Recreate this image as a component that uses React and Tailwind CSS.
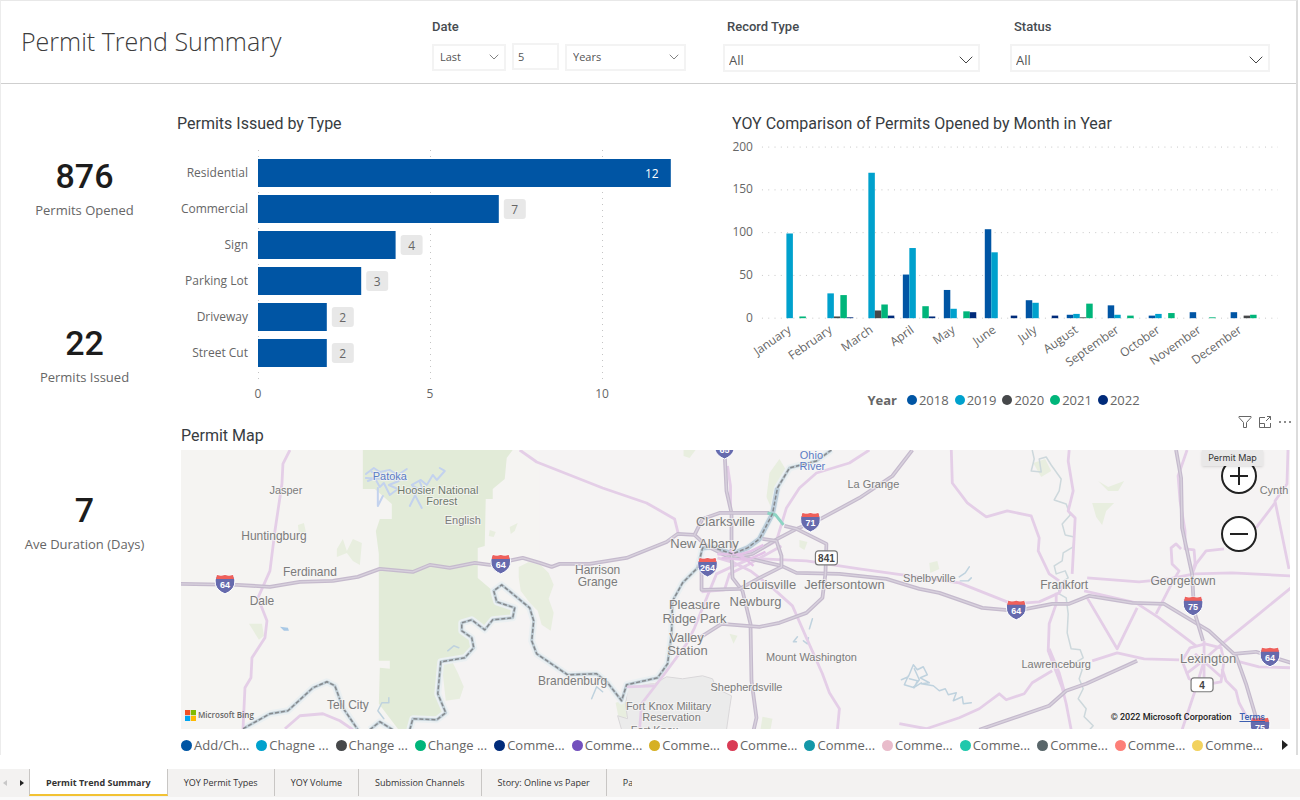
import React, { useState } from 'react';
import { ChevronDown } from 'lucide-react';

const COLORS = ['#0055a4', '#00a1cd', '#46484a', '#00b57a', '#002b7a'];

const kpis = [
  { value: '876', label: 'Permits Opened' },
  { value: '22', label: 'Permits Issued' },
  { value: '7', label: 'Ave Duration (Days)' },
];

const permitTypes = [
  { name: 'Residential', count: 12 },
  { name: 'Commercial', count: 7 },
  { name: 'Sign', count: 4 },
  { name: 'Parking Lot', count: 3 },
  { name: 'Driveway', count: 2 },
  { name: 'Street Cut', count: 2 },
];

const years = ['2018', '2019', '2020', '2021', '2022'];

// permits opened per month, one value per year
const months = [
  { name: 'January', values: [0, 99, 0, 2, 0] },
  { name: 'February', values: [0, 29, 2, 27, 1] },
  { name: 'March', values: [0, 170, 9, 16, 3] },
  { name: 'April', values: [51, 82, 0, 14, 2] },
  { name: 'May', values: [33, 11, 0, 8, 7] },
  { name: 'June', values: [104, 77, 0, 0, 3] },
  { name: 'July', values: [21, 18, 0, 0, 3] },
  { name: 'August', values: [4, 5, 1, 17, 0] },
  { name: 'September', values: [15, 4, 0, 3, 0] },
  { name: 'October', values: [3, 5, 0, 6, 0] },
  { name: 'November', values: [7, 0, 0, 1, 0] },
  { name: 'December', values: [7, 0, 3, 4, 0] },
];

const mapLegend = [
  ['Add/Ch...', '#0055a4'],
  ['Chagne ...', '#00a1cd'],
  ['Change ...', '#46484a'],
  ['Change ...', '#00b57a'],
  ['Comme...', '#002b7a'],
  ['Comme...', '#7350bd'],
  ['Comme...', '#d6b024'],
  ['Comme...', '#d93b55'],
  ['Comme...', '#1497a8'],
  ['Comme...', '#e9bccb'],
  ['Comme...', '#1fc8ac'],
  ['Comme...', '#59666a'],
  ['Comme...', '#fd7f78'],
  ['Comme...', '#f2d25e'],
];

const tabs = ['Permit Trend Summary', 'YOY Permit Types', 'YOY Volume', 'Submission Channels', 'Story: Online vs Paper'];

const interstates = [
  '180,583 237,584 270,586 300,581 333,580 358,576 380,568 413,571 430,564 450,567 475,562 490,564 523,557 540,562 552,566 560,563 590,563 627,557 667,541 678,533 695,534 707,545 727,555 747,557 782,565 797,572 840,573 887,578 920,588 940,592 983,607 1017,610 1053,603 1070,603 1090,595 1133,602 1165,603 1210,630 1237,655 1247,683 1258,720 1262,730',
  '1235,653 1257,651 1292,662',
  '913,449 893,475 860,497 823,517 797,528 778,538 753,553 735,556',
  '725,449 727,490 732,512 732,553 733,577 743,590 751,623 752,680 757,717 754,730',
  '695,534 703,518 720,512 770,512',
  '785,525 797,528 827,543 826,573 823,597 807,612 780,622 760,626 722,623 700,637',
  '702,568 702,589 740,588 760,577 782,566 782,555 777,540 763,538',
  '980,729 1050,705 1067,690 1087,683 1127,665 1138,660',
  '1177,449 1182,477 1183,527 1193,573 1195,610 1204,640',
];

const highways = [
  '290,449 283,463 282,483 275,530 270,570 258,597 267,620 265,637 252,657 251,677 245,687 243,729',
  '285,728 300,715 323,713 340,720 353,729',
  '520,449 537,461 603,487 647,502 675,518 679,534',
  '728,465 731,485 731,512',
  '870,449 850,462 817,472 800,487 787,507 780,530 777,540 745,557',
  '753,557 730,567 717,573 710,590 695,627 687,643 665,673 642,703 640,729',
  '702,591 725,589 730,573 750,563 782,545',
  '718,553 740,557 807,560 860,568 903,574 960,582 1013,603 1040,601 1060,592 1066,580',
  '718,557 735,562 751,570 773,587 793,605 807,637 823,673 830,692 840,708 838,729',
  '627,686 655,685',
  '952,449 953,482 968,502 987,516 1008,510 1032,515 1040,537 1039,550 1050,573 1060,580',
  '1070,449 1069,460 1074,490 1069,510 1076,517 1073,573',
  '1088,577 1140,581 1170,578 1195,573 1233,572 1292,575',
  '1188,449 1179,475 1181,500 1186,530 1186,548 1195,549 1196,562 1193,573',
  '1182,548 1177,543 1172,547 1173,563 1180,570 1174,580 1157,613',
  '1225,548 1207,550 1197,563 1193,573',
  '1289,449 1288,483 1276,500 1290,568',
  '1276,502 1257,527',
  '1292,587 1260,613 1223,643 1200,663 1187,673',
  '1085,590 1137,602 1160,617 1197,645',
  '1088,597 1118,648 1138,607',
  '1093,660 1118,652 1145,658 1180,659',
  '1237,660 1260,666 1292,667',
  '1057,592 1057,603 1050,623 1049,650 1063,687 1067,703 1072,729',
  '1050,648 1060,672 1065,690',
  '900,723 927,728 960,717 980,708 1000,693 1007,699 1025,693 1033,682 1053,670',
  '1205,660 1196,690 1183,729',
  '1223,668 1227,680 1237,690 1240,702 1247,715',
  '1183,660 1191,647 1206,643 1222,647 1225,660 1222,681 1205,684 1190,678 1183,660',
  '1205,640 1205,680',
  '1196,653 1222,676',
];

const rivers = [
  '243,728 270,713 288,710 313,687 327,681 335,685 343,707 358,729',
  '370,729 380,721 393,729',
  '410,729 413,718 437,719 446,712 438,693 441,661 465,657 474,647 472,637 462,630 462,622 472,619 485,629 493,619 513,617 515,607 497,601 494,590 502,584 530,607 534,620 532,640 537,653 568,674 597,673 608,682 622,700 627,684 658,677 668,663 672,633 673,600 683,582 698,567 703,547 712,546 733,553 748,547 760,538 773,513 778,487 790,467 817,460 832,449',
];

const KENTUCKY_RIVER =
  'M1033 449l2 9-3 12 10 1-2-13 7-2 5 8 10 14-2 12-5 9 12 4 4 11-8 9 3 11 9 2-1 10-10 6-1 8-8 5 2 8 9-3 3 7-10 7 1 9 7 4 2 16-1 19 4 16 9 1 3 8-8 5 7 7-3 9 4 10-5 10 8 10-2 8 9 9-8 9 12 9 4 9';

const places = [
  ['Jasper', 286, 493, 11],
  ['Huntingburg', 274, 539, 12],
  ['Ferdinand', 310, 575, 12],
  ['Dale', 262, 604, 12],
  ['Tell City', 348, 708, 12],
  ['English', 463, 523, 11],
  ['Harrison', 598, 573, 12],
  ['Grange', 598, 585, 12],
  ['Brandenburg', 573, 684, 12],
  ['Clarksville', 726, 525, 13],
  ['New Albany', 705, 547, 13],
  ['Louisville', 770, 588, 13],
  ['Jeffersontown', 845, 588, 13],
  ['Newburg', 756, 605, 13],
  ['Pleasure', 695, 608, 13],
  ['Ridge Park', 695, 622, 13],
  ['Valley', 687, 641, 13],
  ['Station', 688, 654, 13],
  ['Mount Washington', 812, 660, 11],
  ['Shepherdsville', 747, 690, 11],
  ['Fort Knox Military', 669, 709, 11],
  ['Reservation', 672, 720, 11],
  ['Fort Knox', 655, 733, 11],
  ['La Grange', 874, 487, 11],
  ['Shelbyville', 930, 581, 11],
  ['Frankfort', 1065, 588, 12],
  ['Georgetown', 1184, 584, 12],
  ['Lexington', 1209, 662, 13],
  ['Lawrenceburg', 1057, 667, 11],
  ['Cynth', 1275, 493, 11],
];

const shields = [
  ['64', 225, 583],
  ['64', 501, 563],
  ['65', 725, 448],
  ['71', 811, 521],
  ['264', 708, 566],
  ['64', 1017, 609],
  ['75', 1194, 605],
  ['64', 1271, 656],
  ['75', 1261, 726],
];

const Shield = ({ text, x, y }) => (
  <g transform={`translate(${x} ${y})`}>
    <path d="M-8 -9q4 1.500 8 0q4 1.500 8 0q3 5 1.500 10q-2 6 -9.500 9q-7.500 -3 -9.500 -9q-1.500 -5 1.500 -10z" fill="#666aad" stroke="#fff" strokeWidth="1" />
    <path d="M-8 -9q4 1.500 8 0q4 1.500 8 0l1 4h-18z" fill="#f0605a" />
    <text y="4" textAnchor="middle" fontSize="9" fontWeight="bold" fill="#fff">{text}</text>
  </g>
);

const RouteSign = ({ text, x, y }) => (
  <g transform={`translate(${x} ${y})`}>
    <rect x="-11" y="-7" width="22" height="14" rx="3" fill="#fff" stroke="#7a7a7a" strokeWidth="1.200" />
    <text y="4" textAnchor="middle" fontSize="10" fontWeight="bold" fill="#444">{text}</text>
  </g>
);

const MapDrawing = () => (
  <svg viewBox="181 449 1110 280" className="block w-full h-auto font-['Liberation_Sans',sans-serif]" role="img" aria-label="Permit map">
    <rect x="181" y="449" width="1110" height="280" fill="#f5f4f2" />
    <path d="M540 449h751v280H410l3-11 33-6-8-19 3-32 24-4 9-20 40-20 26-10z" fill="#f5f3f3" />

    {/* forests and parks */}
    <path
      d="M363 449H513L507 457 505 478 493 488V498H486L485 545 478 547V577L493 590 497 601 515 607 513 617 493 619 485 629 472 619 462 622 462 630 472 637 474 647 465 657 441 661 438 693 446 712 437 719 413 718 410 729H398V728L379 703 380 667 390 668V660H379V553L376 530 380 518H392V503L375 488H363Z"
      fill="#e2ebd8"
    />
    <g fill="#e8eedf">
      <path d="M519 566l10-5 12 3 8 8 5 12-5 14 5 14-3 18-9-6-4-14-8-8-9-12-2-14z" />
      <path d="M249 623h13l2 12-5 4z" />
      <path d="M337 548l6-10 4 12 6-12 9 4-2 22-7-4-6-8-10 4z" />
      <path d="M442 664l10-4 6 12 6 14-4 12-14 2z" />
      <path d="M770 472l10-14 6 10-8 24-5 18-6-14z" />
      <path d="M1093 502h22l-8 8-4 14-6-8z" />
      <path d="M1099 480l10 6 16-6-6 10h-10z" />
      <path d="M1034 462l12-4 6 12-10 6z" />
      <path d="M763 716l10 2-2 11h-10z" />
      <path d="M616 702l12-4 2 16-10 8z" />
      <path d="M298 524l6-2 2 9-7 2z" />
      <path d="M730 633l8 2-4 8z" />
      <path d="M684 449h12l-6 8-6-2z" />
      <path d="M930 562l8-2 2 8-9 4z" />
      <path d="M490 529l6 2-2 5-5-1zM510 526l8-4-3 8-4 3z" />
      <path d="M800 539l8 2-3 8-5-3z" />
    </g>
    <path d="M627 684l28-1 12-7 16 2 20-3 10 3 4 10 15 7-2 13-3 21H622l-4-14 10 3-2-14 2-16z" fill="#ebebeb" stroke="#d9d7d9" strokeWidth="1" />

    {/* lakes */}
    <g fill="none" stroke="#c3d2ee" strokeWidth="2" strokeLinecap="round" strokeLinejoin="round">
      <path d="M366 473l8-6 6 4 10-2 8 5 9-6M368 480l7-3 5 9 4-4 6 12 8-6-9-4 10-4M378 487l0 18 5-10M412 484l9-5 6 5 6-10 4 5 8-9-5-3M410 505l6-12-3-8 11 6-4-10M413 490l9 17" />
      <path d="M366 477l40 2M372 471l34 7" />
    </g>
    <path d="M280 626l8 1 1 3-5 0z" fill="#a9c9e6" />
    <g fill="none" stroke="#bfd2de" strokeWidth="1.500" strokeLinecap="round" strokeLinejoin="round">
      <path d="M902 679l7-3 5-12 4 5 6-3 4 8-7 3 9 5-8 1 12 2 6 5 6-2 3 6 8-2-3 8 9-4 1 7 8-1M909 675l-4 9 10 3 3-7-8-2M915 668l5 11-6 8 8-5" />
      <path d="M960 576l6-4 4-6M961 580l8 0 3-3M798 636l-4 5 3 0M804 640l4 3 1-6M592 698l5-12 6 5M384 718l-6-8 4-8 7 0 0-5M448 650l6-5 5 2M810 628l3-10" />
    </g>
    <path d={KENTUCKY_RIVER} fill="none" stroke="#cdd8dc" strokeWidth="1.500" strokeLinejoin="round" />

    {rivers.map((points) => (
      <g key={points} fill="none" strokeLinejoin="round">
        <polyline points={points} stroke="#ebf0f2" strokeWidth="7" />
        <polyline points={points} stroke="#c0ced6" strokeWidth="3" />
      </g>
    ))}
    <polyline points="703,547 712,546 733,553 748,547 760,538 773,513 778,487" fill="none" stroke="#bccdda" strokeWidth="5" strokeLinejoin="round" />

    {highways.map((points) => (
      <polyline key={points} points={points} fill="none" stroke="#e4cee7" strokeWidth="2.800" strokeLinejoin="round" />
    ))}
    {interstates.map((points) => (
      <g key={points} fill="none" strokeLinejoin="round">
        <polyline points={points} stroke="#c5bacd" strokeWidth="3.800" />
        <polyline points={points} stroke="#d8d1dd" strokeWidth="1.400" />
      </g>
    ))}
    <path d="M718 553h24l10-3 12-6M722 557l26 2 18-8M730 550l20 10M740 553l14 12" fill="none" stroke="#e3c3e6" strokeWidth="2.500" />
    <path d="M768 512l8 2 8 10" fill="none" stroke="#8ed4c4" strokeWidth="3" />
    {rivers.map((points) => (
      <polyline key={points} points={points} fill="none" stroke="#85898d" strokeWidth="1.500" strokeDasharray="4 2" strokeLinejoin="round" />
    ))}

    <g fill="#7b7b7b" stroke="#f7f6f5" strokeWidth="2" strokeOpacity="0.700" paintOrder="stroke" textAnchor="middle">
      {places.map(([name, x, y, size]) => (
        <text key={`${name}${y}`} x={x} y={y} fontSize={size}>{name}</text>
      ))}
      <g fontSize="11" fill="#6f7a6d">
        <text x="438" y="493">Hoosier National</text>
        <text x="442" y="504">Forest</text>
      </g>
      <g fontSize="11" fill="#5b7cc4">
        <text x="390" y="479">Patoka</text>
        <text x="812" y="458">Ohio</text>
        <text x="813" y="469">River</text>
      </g>
    </g>

    {shields.map(([text, x, y]) => (
      <Shield key={`${x}${y}`} text={text} x={x} y={y} />
    ))}
    <RouteSign text="841" x={827} y={557} />
    <RouteSign text="4" x={1203} y={684} />
  </svg>
);

const TypeChart = () => {
  const unit = 34.4;
  return (
    <svg viewBox="0 0 537 264" className="block w-full h-auto mt-[7px]" role="img" aria-label="Permits issued by type">
      {[0, 5, 10].map((tick) => (
        <g key={tick}>
          <line x1={81.5 + tick * unit} x2={81.5 + tick * unit} y1="9" y2="243" stroke="#c4c4c4" strokeDasharray="1 5" />
          <text x={81 + tick * unit} y="257" textAnchor="middle" fontSize="12" fill="#666">{tick}</text>
        </g>
      ))}
      {permitTypes.map(({ name, count }, i) => {
        const y = 18 + i * 36;
        const end = 81 + count * unit;
        const inside = count > 10;
        return (
          <g key={name}>
            <text x="71" y={y + 18} textAnchor="end" fontSize="12" fill="#666">{name}</text>
            <rect x="81" y={y} width={count * unit} height="28" fill="#0055a4" />
            {!inside && <rect x={end + 5} y={y + 4} width="22" height="20" rx="3" fill="#e8e8e8" />}
            <text x={inside ? end - 19 : end + 16} y={y + 19} textAnchor="middle" fontSize="12" fill={inside ? '#fff' : '#666'}>{count}</text>
          </g>
        );
      })}
    </svg>
  );
};

const MonthChart = () => {
  const base = 176;
  const scale = 0.857;
  return (
    <svg viewBox="0 0 556 234" className="block w-full h-auto mt-2 overflow-visible" role="img" aria-label="Permits opened by month">
      {[0, 50, 100, 150, 200].map((tick) => (
        <g key={tick}>
          <line x1="30" x2="547" y1={base + 0.5 - tick * scale} y2={base + 0.5 - tick * scale} stroke="#c8c8c8" strokeDasharray="1 5.300" />
          <text x="21" y={base + 4 - tick * scale} textAnchor="end" fontSize="12" fill="#666">{tick}</text>
        </g>
      ))}
      {months.map(({ name, values }, m) => {
        const x = 48 + m * 41.05;
        return (
          <g key={name}>
            {values.map((value, i) => (
              <rect key={years[i]} x={x + i * 6.5} y={base + 0.5 - value * scale} width="6.500" height={value * scale} fill={COLORS[i]} />
            ))}
            <text textAnchor="end" fontSize="12" fill="#666" transform={`translate(${x + 12} 190) rotate(-35)`}>{name}</text>
          </g>
        );
      })}
    </svg>
  );
};

const Dropdown = ({ label, options, className, large }) => (
  <div className={`relative ${className}`}>
    <select
      aria-label={label}
      className={
        large
          ? "w-full h-[28px] appearance-none border-2 border-[#f3f3f3] bg-white pl-1 pt-1 text-[13px] leading-5 text-[#555]"
          : "w-full h-[27px] appearance-none border-2 border-[#f3f3f3] bg-white pl-1.5 text-[11px] text-[#555]"
      }
    >
      {options.map((option) => (
        <option key={option}>{option}</option>
      ))}
    </select>
    <ChevronDown
      strokeWidth={1}
      className={
        large
          ? "absolute right-0.5 top-1 size-6 text-[#444] pointer-events-none"
          : "absolute right-1 top-1.5 size-4 text-[#444] pointer-events-none"
      }
    />
  </div>
);

const App = () => {
  const [active, setActive] = useState(tabs[0]);
  const [amount, setAmount] = useState('5');

  return (
    <div className="min-h-screen flex flex-col bg-[#fafafa] font-['Open_Sans','Noto_Sans',sans-serif] text-[#666]">
      <div className="flex-1 bg-white pb-3">
        <div className="mr-0.5 border-t border-l border-r-2 border-t-[#e8e8e8] border-l-[#ececec] border-r-[#dcdcdc]">
          <header className="grid grid-cols-[431fr_291fr_287fr_286fr] h-[83px] border-b border-[#cfcfcf]">
            <h1 className="pl-5 pt-5 text-[25px] leading-10 font-light text-[#3c3c3c]">Permit Trend Summary</h1>
            <div className="pt-4">
              <h2 className="font-[Roboto] font-medium text-[13px] leading-5 text-[#464b50]">Date</h2>
              <div className="flex gap-1.5 mt-1.5">
                <Dropdown label="Period direction" options={['Last', 'Next', 'This']} className="w-[74px]" />
                <input
                  aria-label="Period length"
                  value={amount}
                  onChange={(e) => setAmount(e.target.value)}
                  className="w-[47px] h-[27px] border-2 border-[#f3f3f3] pl-1 text-[11px] text-[#555]"
                />
                <Dropdown label="Period unit" options={['Years', 'Months', 'Days']} className="w-[121px]" />
              </div>
            </div>
            <div className="pt-4">
              <h2 className="pl-1 font-[Roboto] font-medium text-[13px] leading-5 text-[#464b50]">Record Type</h2>
              <Dropdown label="Record Type" options={['All']} className="mt-[7px] mr-[30px]" large />
            </div>
            <div className="pt-4">
              <h2 className="pl-1 font-[Roboto] font-medium text-[13px] leading-5 text-[#464b50]">Status</h2>
              <Dropdown label="Status" options={['All']} className="mt-[7px] mr-[26px]" large />
            </div>
          </header>

          <main className="flex">
            <aside className="w-[167px] shrink-0 pt-[74px]">
              {kpis.map(({ value, label }) => (
                <div key={label} className="h-[167px] text-center">
                  <p className="font-[Roboto] font-medium text-[34px] leading-9 text-[#1c1c1c]">{value}</p>
                  <p className="mt-1.5 text-[13px] leading-5">{label}</p>
                </div>
              ))}
            </aside>

            <div className="flex-1 min-w-0">
              <div className="grid grid-cols-[555fr_573fr]">
                <section className="px-[9px] pt-[30px]">
                  <h2 className="font-[Roboto] text-[16px] leading-5 text-[#373c41]">Permits Issued by Type</h2>
                  <TypeChart />
                </section>
                <section className="px-[9px] pt-[30px]">
                  <h2 className="font-[Roboto] text-[16px] leading-5 text-[#373c41]">YOY Comparison of Permits Opened by Month in Year</h2>
                  <MonthChart />
                  <div className="flex justify-center gap-1.5 mt-3.5 pr-3 text-[13px] leading-5">
                    <span className="mr-1 font-bold">Year</span>
                    {years.map((year, i) => (
                      <span key={year} className="flex items-center gap-0.5">
                        <span className="size-2.5 rounded-full" style={{ backgroundColor: COLORS[i] }} />
                        {year}
                      </span>
                    ))}
                  </div>
                </section>
              </div>

              <section className="pl-[13px] pr-[6px]">
                <div className="flex justify-between h-9">
                  <h2 className="self-end font-[Roboto] text-[16px] leading-5 text-[#373c41]">Permit Map</h2>
                  <div className="flex gap-1.5 pt-1 -mr-0.5 h-5 text-[#666]">
                    <button aria-label="Filters">
                      <svg viewBox="0 0 14 14" className="size-3.5" fill="none" stroke="currentColor">
                        <path d="M1 1.500h12v1L8.500 7.500v5h-3v-5L1 2.500z" />
                      </svg>
                    </button>
                    <button aria-label="Focus mode">
                      <svg viewBox="0 0 14 14" className="size-3.5" fill="none" stroke="currentColor">
                        <path d="M7 2.500H1.500v10h11V8M1.500 8.500h5v4M9 1.500h3.500V5M12.500 1.500L8 6" />
                      </svg>
                    </button>
                    <button aria-label="More options">
                      <svg viewBox="0 0 14 14" className="size-3.5" fill="currentColor">
                        <circle cx="2" cy="7" r="1" />
                        <circle cx="7" cy="7" r="1" />
                        <circle cx="12" cy="7" r="1" />
                      </svg>
                    </button>
                  </div>
                </div>

                <div className="relative mt-1 overflow-hidden">
                  <MapDrawing />
                  <button aria-label="Zoom in" className="absolute right-[33px] top-2 size-9 rounded-full border-2 border-[#222] bg-white flex items-center justify-center">
                    <svg viewBox="0 0 20 20" className="size-5" stroke="#222" strokeWidth="2">
                      <path d="M10 1v18M1 10h18" />
                    </svg>
                  </button>
                  <button aria-label="Zoom out" className="absolute right-[33px] top-[66px] size-9 rounded-full border-2 border-[#222] bg-white flex items-center justify-center">
                    <svg viewBox="0 0 20 20" className="size-5" stroke="#222" strokeWidth="2">
                      <path d="M1 10h18" />
                    </svg>
                  </button>
                  <span className="absolute right-[27px] top-0 w-[61px] text-center text-[9px] leading-4 font-[Inter] text-[#333] bg-[#e9e8e8] shadow">Permit Map</span>
                  <div className="absolute left-1 bottom-2 flex items-center gap-0.5 text-[8px] leading-3 font-semibold">
                    <svg viewBox="0 0 10 10" className="size-[11px]">
                      <path d="M0 0h4.700v4.700H0z" fill="#f25022" />
                      <path d="M5.300 0H10v4.700H5.300z" fill="#7fba00" />
                      <path d="M0 5.300h4.700V10H0z" fill="#00a4ef" />
                      <path d="M5.300 5.300H10V10H5.300z" fill="#ffb900" />
                    </svg>
                    Microsoft Bing
                  </div>
                  <div className="absolute right-[25px] bottom-1.5 flex gap-2 text-[9px] leading-3 font-[Roboto] font-medium text-[#222]">
                    <span>© 2022 Microsoft Corporation</span>
                    <a href="#terms" className="text-[#3d5fb0] underline">Terms</a>
                  </div>
                </div>

                <div className="flex items-center justify-between mt-1.5 text-[13px] leading-5">
                  {mapLegend.map(([name, color], i) => (
                    <span key={i} className="flex items-center gap-0.5 whitespace-nowrap">
                      <span className="size-[11px] rounded-full" style={{ backgroundColor: color }} />
                      {name}
                    </span>
                  ))}
                  <button aria-label="Next legend items" className="ml-3 mr-0.5">
                    <svg viewBox="0 0 6 10" className="w-1.5 h-2.5" fill="#222">
                      <path d="M0 0l6 5-6 5z" />
                    </svg>
                  </button>
                </div>
              </section>
            </div>
          </main>
        </div>
      </div>

      <nav className="flex h-7 mb-[3px] pb-px bg-[#f3f2f1] text-[9px] text-[#333]">
        <div className="flex items-center justify-between w-[29px] px-[3px] shrink-0">
          <button aria-label="Previous page">
            <svg viewBox="0 0 4 6" className="w-1 h-1.5" fill="#c8c8c8"><path d="M4 0L0 3l4 3z" /></svg>
          </button>
          <button aria-label="Next page" className="pr-0.5">
            <svg viewBox="0 0 4 6" className="w-1 h-1.5" fill="#222"><path d="M0 0l4 3-4 3z" /></svg>
          </button>
        </div>
        {tabs.map((tab) => (
          <button
            key={tab}
            onClick={() => setActive(tab)}
            className={
              tab === active
                ? "px-4 pt-0.5 border-l border-r border-[#c8c6c4] border-b-2 border-b-[#f2c233] bg-white font-bold whitespace-nowrap"
                : "px-4 border-r border-[#c8c6c4] font-medium whitespace-nowrap"
            }
          >
            {tab}
          </button>
        ))}
        <button className="ml-4 w-[9px] overflow-hidden whitespace-nowrap font-medium">Pa</button>
      </nav>
    </div>
  );
};

export default App;
